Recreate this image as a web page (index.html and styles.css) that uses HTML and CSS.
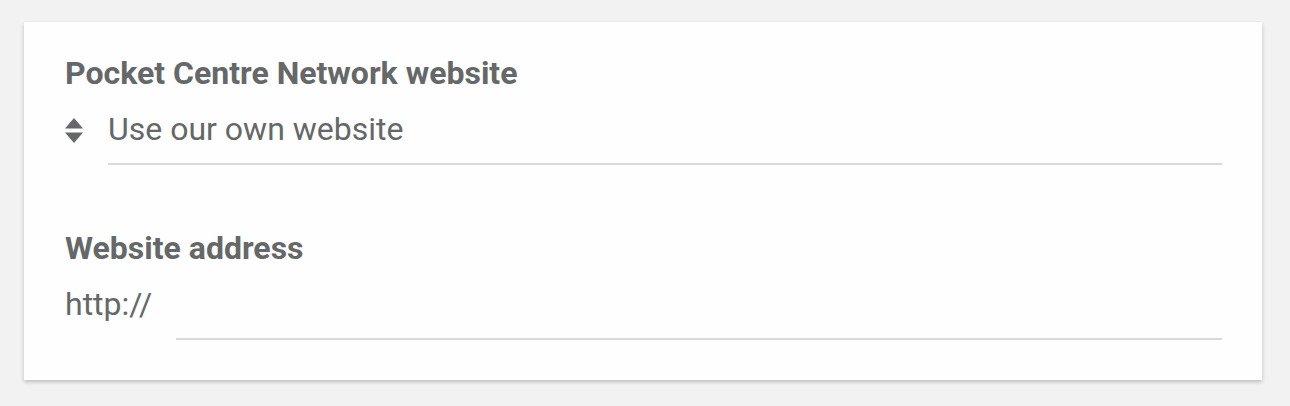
FILE: index.html
```html
<!DOCTYPE html>
<html>
<head>
<meta charset="utf-8">
<link rel="stylesheet" href="styles.css">
</head>
<body>
<div class="card">
  <div class="field">
    <div class="label">Pocket Centre Network website</div>
    <div class="select-row">
      <svg class="updown" width="18" height="25" viewBox="0 0 18 25"><path d="M9 0 L18 10.5 L0 10.5 Z M0 14.5 L18 14.5 L9 25 Z" fill="#656868"/></svg>
      <div class="select">Use our own website</div>
    </div>
  </div>
  <div class="field second">
    <div class="label">Website address</div>
    <div class="input-row">
      <span class="prefix">http://</span>
      <div class="input"></div>
    </div>
  </div>
</div>
</body>
</html>
```
FILE: styles.css
```css
html, body { margin: 0; padding: 0; }
body {
  background: #f2f2f2;
  font-family: Roboto, "Liberation Sans", sans-serif;
  color: #656868;
  padding: 22px 28px 26px 24px;
}
.card {
  background: #fefefe;
  box-shadow: 0 2px 4px rgba(0,0,0,0.22);
  padding: 32px 40px 40px 41px;
}
.label {
  font-weight: 700;
  font-size: 32px;
  line-height: 38px;
}
.select-row {
  display: flex;
  align-items: flex-start;
  margin-top: 18px;
}
.updown { margin-top: 8px; width: 18px; flex: none; }
.select {
  flex: 1;
  margin-left: 25px;
  font-size: 32px;
  line-height: 38px;
  padding: 0 0 15px;
  border-bottom: 2px solid #d9d9d9;
}
.second { margin-top: 64px; }
.input-row {
  display: flex;
  align-items: flex-start;
  margin-top: 18px;
}
.prefix { font-size: 32px; line-height: 38px; width: 111px; flex: none; }
.input { flex: 1; height: 53px; border-bottom: 2px solid #d9d9d9; }
```
